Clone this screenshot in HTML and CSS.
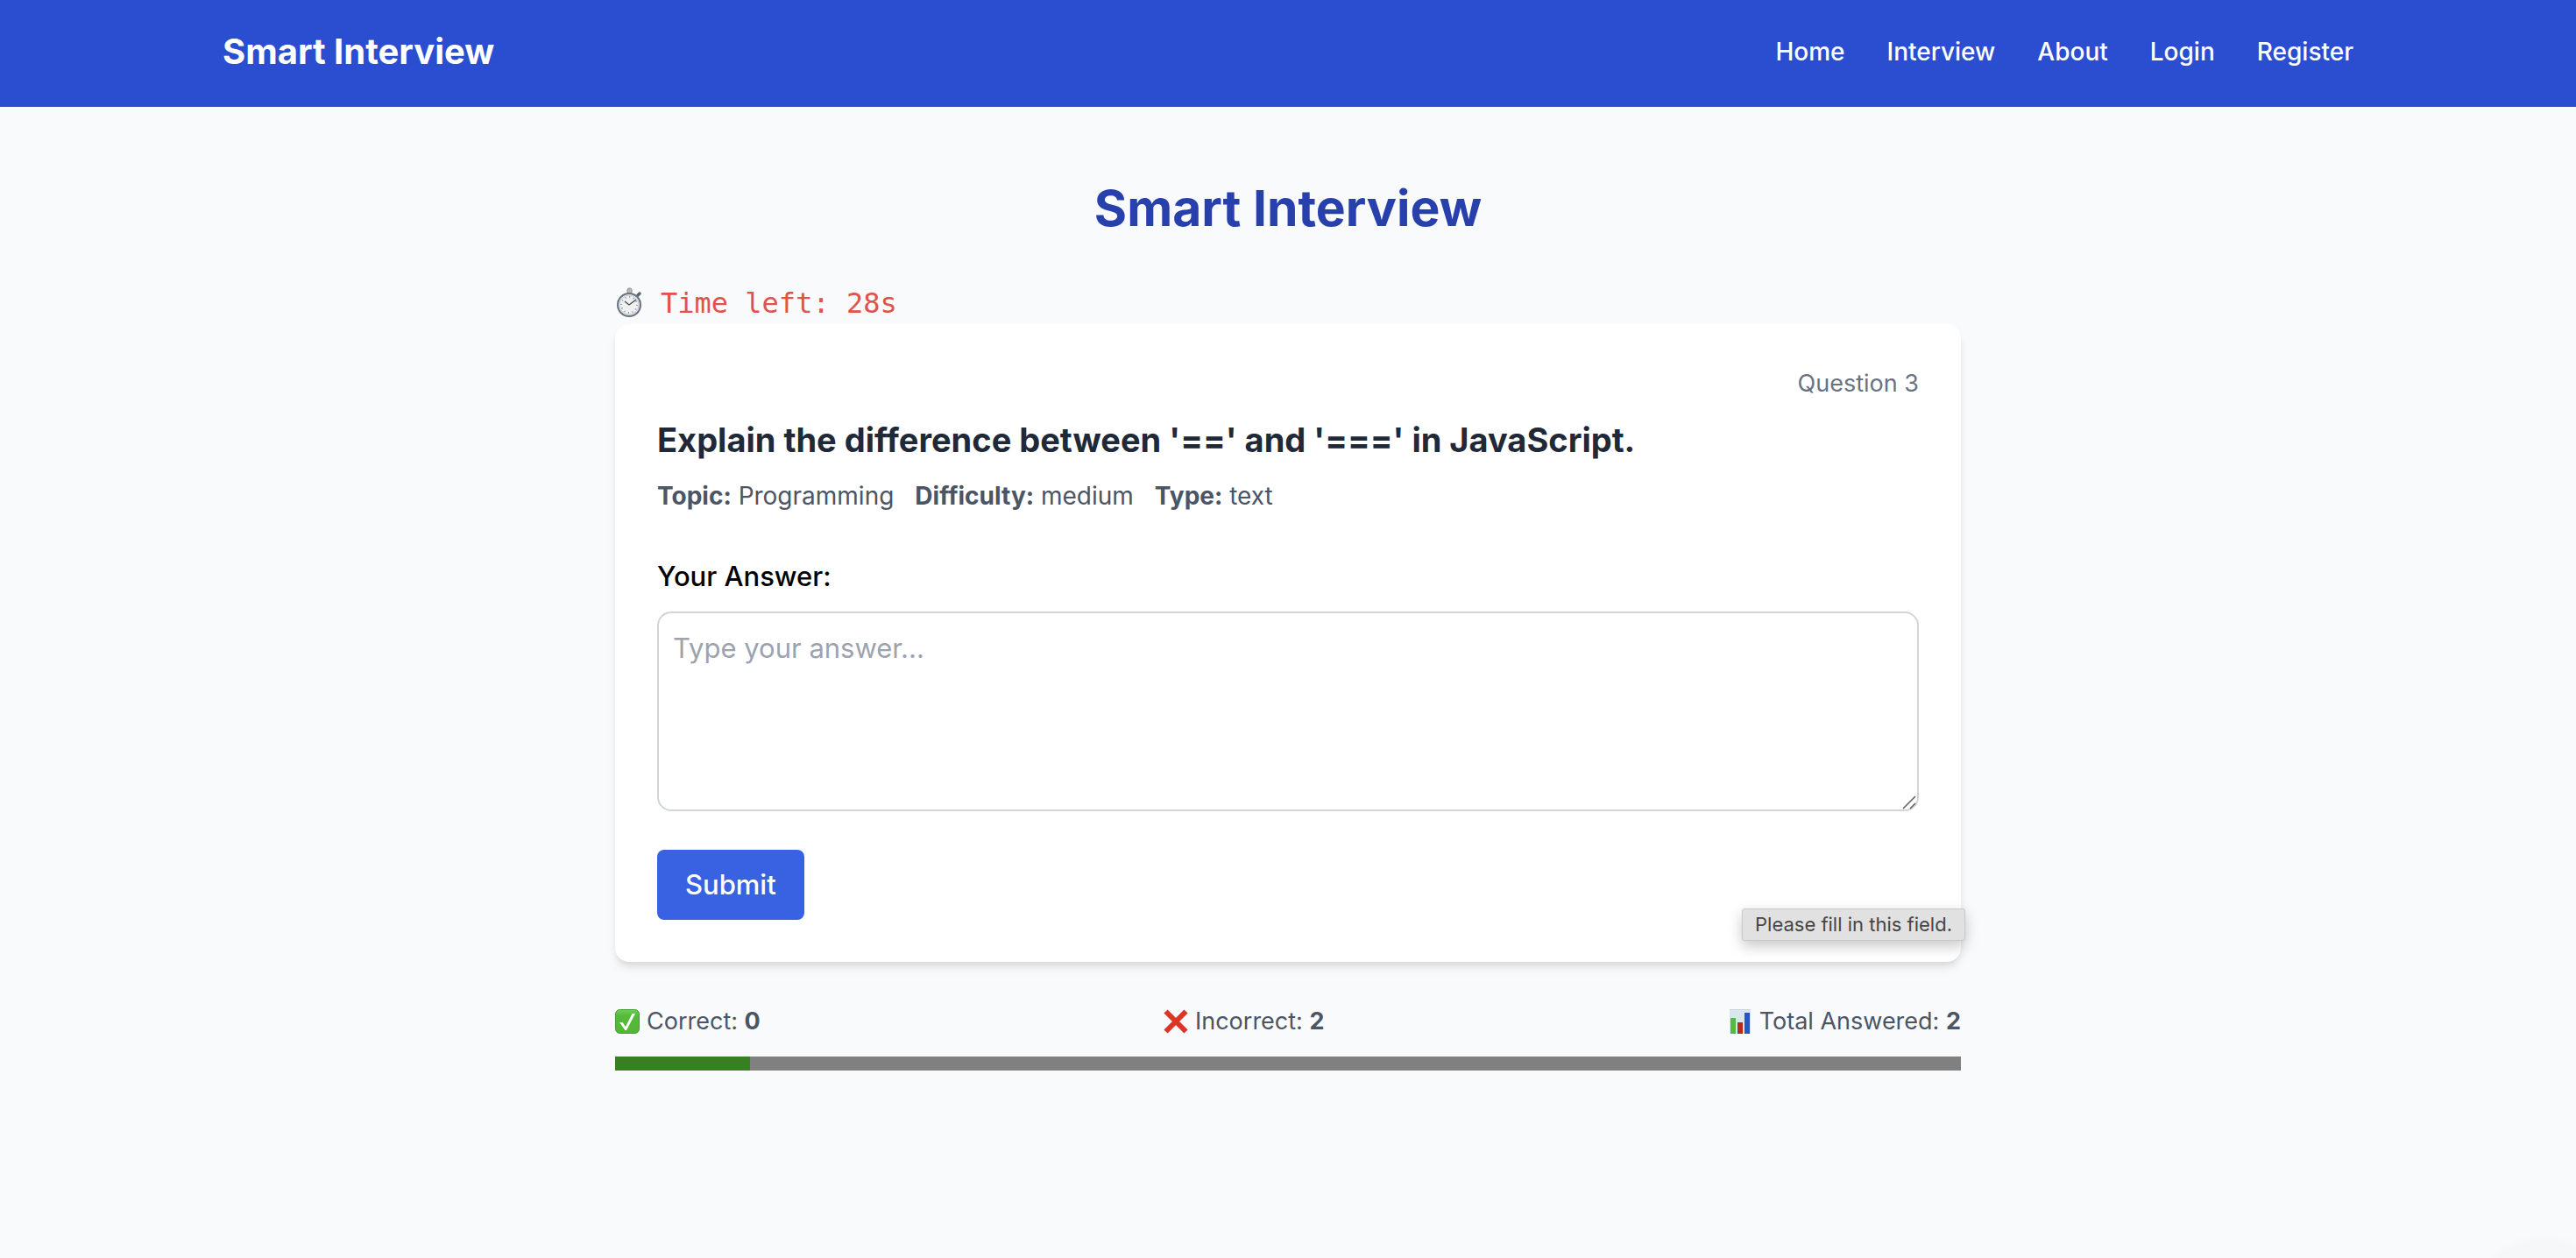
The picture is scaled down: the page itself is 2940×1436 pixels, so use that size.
FILE: index.html
```html
<!DOCTYPE html>
<html lang="en">
<head>
<meta charset="utf-8">
<title>Smart Interview</title>
<link rel="stylesheet" href="styles.css">
</head>
<body>
<header class="navbar">
  <div class="navbar-inner">
    <a class="brand" href="#">Smart Interview</a>
    <nav class="nav-links">
      <a href="#">Home</a>
      <a href="#">Interview</a>
      <a href="#">About</a>
      <a href="#">Login</a>
      <a href="#">Register</a>
    </nav>
  </div>
</header>

<main class="interview">
  <h1 class="page-title">Smart Interview</h1>

  <div class="timer">
    <svg class="timer-icon" viewBox="0 0 32 36" aria-hidden="true">
      <rect x="14" y="1" width="5" height="6" rx="2" fill="#b9bdc2" stroke="#84898f" stroke-width="1"/>
      <path d="M26 9l2-2" stroke="#5c6670" stroke-width="3.500" stroke-linecap="round"/>
      <circle cx="16" cy="20" r="13" fill="#eef0f2" stroke="#68727d" stroke-width="2"/>
      <circle cx="16" cy="20" r="11" fill="none" stroke="#c3c8cd" stroke-width="1"/>
      <circle cx="16" cy="20" r="9" fill="none" stroke="#8d949b" stroke-width="2" stroke-dasharray="1 3.710"/>
      <path d="M11 16l5 4 8-6" fill="none" stroke="#3d444b" stroke-width="1.200"/>
    </svg>
    <span>Time left: 28s</span>
  </div>

  <section class="card">
    <p class="question-number">Question 3</p>
    <h2 class="question">Explain the difference between '==' and '===' in JavaScript.</h2>
    <p class="meta">
      <span><strong>Topic:</strong> Programming</span>
      <span><strong>Difficulty:</strong> medium</span>
      <span><strong>Type:</strong> text</span>
    </p>
    <form class="answer-form">
      <label class="answer-label" for="answer">Your Answer:</label>
      <div class="answer-box">
        <textarea id="answer" class="answer" placeholder="Type your answer..." required></textarea>
        <svg class="grip" viewBox="0 0 16 16" aria-hidden="true">
          <path d="M1 15L15 1M9 15l6-6" stroke="#5f5f5f" stroke-width="1.500"/>
        </svg>
      </div>
      <button class="submit" type="submit">Submit</button>
    </form>
    <div class="tooltip" role="tooltip">Please fill in this field.</div>
  </section>

  <div class="stats">
    <div class="stat">
      <svg class="stat-icon" viewBox="0 0 28 28" aria-hidden="true">
        <defs>
          <linearGradient id="tick-green" x1="0" y1="0" x2="0" y2="1">
            <stop offset="0" stop-color="#6fcf55"/>
            <stop offset=".25" stop-color="#55bb3a"/>
            <stop offset="1" stop-color="#55b436"/>
          </linearGradient>
        </defs>
        <rect x=".5" y=".5" width="27" height="27" rx="5" fill="url(#tick-green)" stroke="#459b38"/>
        <path d="M5 15h3.500l3.500 5L19.500 5H23L13 24h-1.500z" fill="#fff"/>
      </svg>
      <span>Correct: <strong>0</strong></span>
    </div>
    <div class="stat">
      <svg class="stat-icon" viewBox="0 0 28 28" aria-hidden="true">
        <path d="M2.500 2.500l23 23M25.500 2.500l-23 23" stroke="#dc3525" stroke-width="6"/>
      </svg>
      <span>Incorrect: <strong>2</strong></span>
    </div>
    <div class="stat">
      <svg class="stat-icon" viewBox="0 0 28 28" aria-hidden="true">
        <rect x="2" y="0" width="24" height="28" fill="#dbe5f0"/>
        <path d="M2 .5h24" stroke="#cbd3da"/>
        <rect x="3" y="10" width="6" height="18" fill="#55bb3e"/>
        <rect x="11" y="15" width="6" height="13" fill="#b72a1c"/>
        <rect x="19" y="4" width="6" height="24" fill="#2558c2"/>
      </svg>
      <span>Total Answered: <strong>2</strong></span>
    </div>
  </div>
  <progress class="progress" value="10" max="100" aria-label="Interview progress"></progress>
</main>
</body>
</html>
```
FILE: styles.css
```css
* {
  box-sizing: border-box;
}

body {
  margin: 0;
  min-height: 100vh;
  background: radial-gradient(circle 96px at calc(100% - 36px) calc(100% + 68px), #f4f5f7, #f6f7f9 90%, transparent) #f9fafc;
  color: #000;
  font-family: Inter, "Noto Sans", sans-serif;
  font-size: 28px;
  line-height: 40px;
}

h1, h2, p {
  margin: 0;
}

.navbar {
  background: #2a4ecf;
  color: #fff;
}

.navbar-inner {
  display: flex;
  align-items: center;
  justify-content: space-between;
  max-width: 2560px;
  margin: 0 auto;
  padding: 31px 64px 35px;
}

.brand {
  color: inherit;
  font-size: 40px;
  font-weight: 700;
  line-height: 56px;
  text-decoration: none;
}

.nav-links {
  display: flex;
  gap: 48px;
}

.nav-links a {
  color: inherit;
  font-weight: 500;
  text-decoration: none;
}

.interview {
  max-width: 1632px;
  margin: 0 auto;
  padding: 80px 48px;
}

.page-title {
  margin-bottom: 48px;
  color: #2740ab;
  font-size: 57px;
  font-weight: 700;
  line-height: 72px;
  text-align: center;
}

.timer {
  display: flex;
  align-items: center;
  gap: 20px;
  color: #e0524a;
  font-family: "DejaVu Sans Mono", monospace;
  font-size: 32px;
  line-height: 48px;
}

.timer-icon {
  width: 32px;
  height: 36px;
}

.card {
  position: relative;
  padding: 48px;
  border-radius: 16px;
  background: #fff;
  box-shadow: 0 8px 12px -2px rgba(0, 0, 0, .1), 0 4px 8px -4px rgba(0, 0, 0, .1);
}

.question-number {
  margin-bottom: 16px;
  color: #6b7280;
  font-size: 27px;
  text-align: right;
}

.question {
  margin-bottom: 16px;
  color: #1f2937;
  font-size: 38px;
  font-weight: 700;
  line-height: 56px;
}

.meta {
  display: flex;
  gap: 24px;
  margin-bottom: 48px;
  color: #4b5563;
}

.answer-label {
  display: block;
  margin-bottom: 16px;
  font-size: 31px;
  font-weight: 500;
  line-height: 48px;
}

.answer-box {
  position: relative;
  margin-bottom: 44px;
}

.answer {
  display: block;
  width: 100%;
  height: 228px;
  padding: 16px;
  border: 2px solid #d1d5db;
  border-radius: 16px;
  background: #fff;
  color: inherit;
  font: inherit;
  font-size: 31px;
  line-height: 48px;
  resize: none;
}

.answer::placeholder {
  color: #9ca3af;
  opacity: 1;
}

.grip {
  position: absolute;
  right: 3px;
  bottom: 2px;
  width: 16px;
  height: 16px;
}

.submit {
  display: block;
  padding: 16px 32px;
  border: 0;
  border-radius: 8px;
  background: #3962e3;
  color: #fff;
  font: inherit;
  font-size: 31px;
  font-weight: 500;
  line-height: 48px;
}

.tooltip {
  position: absolute;
  right: -5px;
  bottom: 24px;
  padding: 2px 14px 3px;
  border: 1px solid #c9c9c9;
  border-radius: 3px;
  background: #e1e1e1;
  box-shadow: 0 6px 16px rgba(0, 0, 0, .22);
  color: #464646;
  font-size: 22px;
  line-height: 30px;
}

.stats {
  display: flex;
  justify-content: space-between;
  margin: 48px 0 20px;
  color: #4b5563;
  font-size: 27px;
}

.stat {
  display: flex;
  align-items: center;
  gap: 8px;
}

.stat-icon {
  width: 28px;
  height: 28px;
}

.progress {
  display: block;
  width: 100%;
  height: 16px;
  border: 0;
  background: #808080;
  appearance: none;
}

.progress::-webkit-progress-bar {
  background: #808080;
}

.progress::-webkit-progress-value {
  background: #387e22;
}
```
